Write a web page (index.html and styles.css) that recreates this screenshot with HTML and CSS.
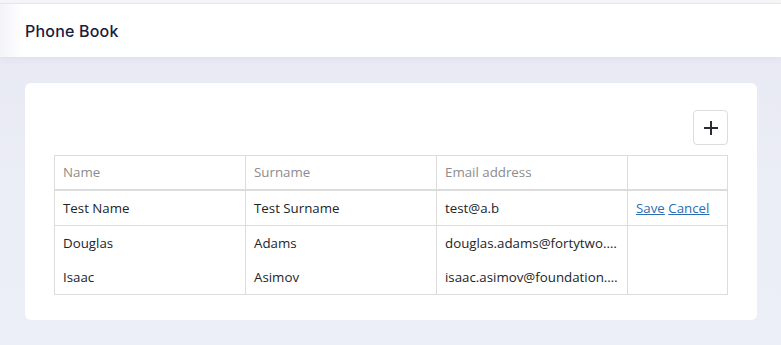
FILE: index.html
```html
<!DOCTYPE html>
<html lang="en">
<head>
    <meta charset="UTF-8">
    <meta name="viewport" content="width=device-width, initial-scale=1.0">
    <title>Phone Book</title>
    <link rel="stylesheet" href="styles.css">
</head>
<body>
    <div class="top-strip"></div>
    <header class="app-header">
        <h1>Phone Book</h1>
    </header>

    <main class="content">
        <div class="card">
            <div class="toolbar">
                <button class="add-btn" type="button" aria-label="Add contact">
                    <svg width="16" height="16" viewBox="0 0 16 16">
                        <path d="M8 1v14M1 8h14" stroke="#2b2b33" stroke-width="2" fill="none"/>
                    </svg>
                </button>
            </div>

            <table class="contacts">
                <colgroup>
                    <col class="col-name">
                    <col class="col-surname">
                    <col class="col-email">
                    <col class="col-actions">
                </colgroup>
                <thead>
                    <tr>
                        <th>Name</th>
                        <th>Surname</th>
                        <th>Email address</th>
                        <th></th>
                    </tr>
                </thead>
                <tbody class="editing">
                    <tr>
                        <td>Test Name</td>
                        <td>Test Surname</td>
                        <td>test@a.b</td>
                        <td class="actions"><a href="#">Save</a> <a href="#">Cancel</a></td>
                    </tr>
                </tbody>
                <tbody class="list">
                    <tr>
                        <td>Douglas</td>
                        <td>Adams</td>
                        <td class="email">douglas.adams@fortytwo.com</td>
                        <td></td>
                    </tr>
                    <tr>
                        <td>Isaac</td>
                        <td>Asimov</td>
                        <td class="email">isaac.asimov@foundation.org</td>
                        <td></td>
                    </tr>
                </tbody>
            </table>
        </div>
    </main>
</body>
</html>
```

FILE: styles.css
```css
* {
    box-sizing: border-box;
}

html, body {
    margin: 0;
    padding: 0;
    height: 100%;
}

body {
    background: linear-gradient(180deg, #e7e8f2 0%, #ebedf7 60%, #eceef8 100%);
    font-family: 'Open Sans', 'Noto Sans', sans-serif;
    color: #212529;
}

.top-strip {
    height: 4px;
    background-color: #f6f6f9;
    border-bottom: 1px solid #e9e9f0;
}

.app-header {
    height: 53px;
    background: linear-gradient(90deg, #f4f4f8 0px, #ffffff 24px);
    display: flex;
    align-items: center;
    padding: 0 25px;
    box-shadow: 0 2px 8px rgba(60, 60, 110, 0.05);
}

.app-header h1 {
    margin: 0;
    font-family: Inter, 'Open Sans', sans-serif;
    font-size: 16px;
    font-weight: 500;
    color: #1c1c3c;
    letter-spacing: 0.2px;
}

.content {
    padding: 26px 24px 0 25px;
}

.card {
    background-color: #fff;
    border-radius: 6px;
    padding: 27px 29px 25px 29px;
}

.toolbar {
    display: flex;
    justify-content: flex-end;
    margin-bottom: 10px;
}

.add-btn {
    width: 35px;
    height: 35px;
    padding: 0;
    display: flex;
    align-items: center;
    justify-content: center;
    background-color: #fff;
    border: 1px solid #dcdcdc;
    border-radius: 4px;
    cursor: pointer;
}

.contacts {
    width: 100%;
    border-collapse: collapse;
    table-layout: fixed;
    font-size: 13.3px;
}

.col-name,
.col-surname,
.col-email {
    width: 191px;
}

.contacts th,
.contacts td {
    border-left: 1px solid #dcdcdc;
    border-right: 1px solid #dcdcdc;
    padding: 0 8px;
    height: 34px;
    text-align: left;
    white-space: nowrap;
    overflow: hidden;
    text-overflow: ellipsis;
}

.contacts thead th {
    font-weight: 400;
    color: #8c8c8c;
    border-top: 1px solid #dcdcdc;
    border-bottom: 2px solid #dcdcdc;
}

.editing td {
    height: 36px;
    border-bottom: 1px solid #dcdcdc;
}

.list tr:last-child td {
    height: 35px;
    border-bottom: 1px solid #dcdcdc;
}

.actions {
    padding-left: 12px;
}

.actions a {
    color: #2a6db5;
    text-decoration: underline;
}
```
